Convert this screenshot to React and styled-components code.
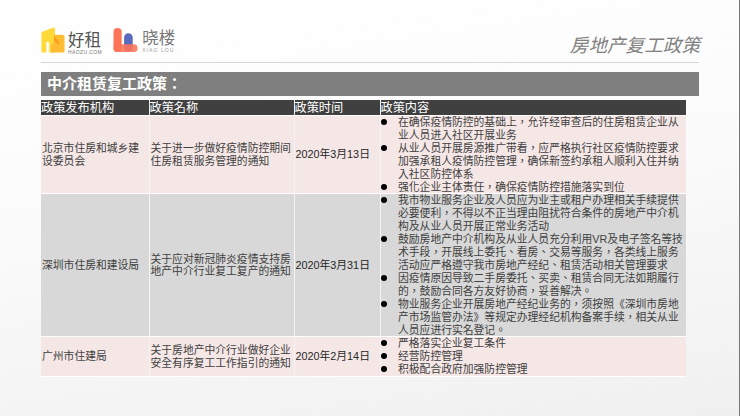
import React from 'react'
import styled, { createGlobalStyle } from 'styled-components'

const cjk = '"Liberation Sans", "Noto Sans CJK TC", sans-serif'

const GlobalStyle = createGlobalStyle`
    html, body {
        margin: 0;
        padding: 0;
    }
`

const Page = styled.div`
    width: 740px;
    height: 416px;
    box-sizing: border-box;
    padding: 0 40px 0 41px;
    overflow: hidden;
    background: linear-gradient(172deg, #ffffff 0%, #fbfbfb 45%, #f0f0f0 100%);
    border-right: 1px solid #777;
    font-family: ${cjk};
`

const Header = styled.header`
    height: 63px;
    box-sizing: border-box;
    padding-bottom: 5px;
    display: flex;
    align-items: flex-end;
    justify-content: space-between;
    border-bottom: 1px solid #d6d6d6;
`

const Logos = styled.div`
    display: flex;
    align-items: flex-end;
    gap: 11px;
    margin-bottom: 4px;
`

const Logo = styled.div`
    display: flex;
    align-items: flex-end;
    gap: 3px;
`

const LogoText = styled.div`
    display: flex;
    flex-direction: column;
    margin-bottom: ${p => p.$lift}px;
`

const LogoName = styled.span`
    font-size: 16.5px;
    line-height: 18px;
    color: ${p => p.$color};
    white-space: nowrap;
`

const LogoSub = styled.span`
    font-size: 5px;
    line-height: 6px;
    letter-spacing: ${p => p.$spacing}px;
    color: ${p => p.$color};
    white-space: nowrap;
`

const PageTitle = styled.h1`
    margin: 0 -1px 0 0;
    font-size: 18.6px;
    line-height: 22px;
    font-weight: 400;
    font-style: italic;
    color: #808080;
    white-space: nowrap;
`

const Banner = styled.h2`
    margin: 9px 0 0;
    height: 24px;
    padding-left: 6px;
    background: #7f7f7f;
    color: #fff;
    font-size: 15px;
    line-height: 24px;
    font-weight: 700;
`

const Table = styled.table`
    margin-top: 4px;
    width: 645px;
    table-layout: fixed;
    border-collapse: collapse;
    color: #404040;
    font-size: 10.8px;
    line-height: 12.9px;
`

const HeadCell = styled.th`
    height: 15px;
    padding: 0;
    background: #404040;
    color: #fff;
    font-size: 12.2px;
    line-height: 14px;
    font-weight: 400;
    text-align: left;
    white-space: nowrap;
    border-right: 1px solid #eee;
    border-bottom: 1px solid #fff;
    &:last-child {
        border-right: 0;
    }
`

const Cell = styled.td`
    padding: 0 0 0 1px;
    background: ${p => (p.$alt ? '#d8d8d8' : '#f5e7e6')};
    vertical-align: middle;
    white-space: pre-line;
    border-right: 1px solid #f4f4f4;
    border-bottom: 1px solid #fff;
    &:last-child {
        padding-left: 0;
        border-right: 0;
    }
`

const DateCell = styled(Cell)`
    color: #262626;
    white-space: nowrap;
`

const BulletList = styled.ul`
    margin: 0;
    padding: 0;
    list-style: none;
`

const Bullet = styled.li`
    display: flex;
    white-space: pre;
    &::before {
        content: '';
        flex: none;
        width: 6px;
        height: 6px;
        margin: 3px 11.5px 0 0;
        border-radius: 50%;
        background: #000;
    }
`

const HaozuIcon = () => (
    <svg width="24" height="26" viewBox="0 0 24 27">
        <path d="M0 6.5 Q0 5 1.5 4.6 L12.5 0.5 Q14 0 14 2 L14 26.5 L8 26.5 L8 17 Q8 15 6.5 15 Q5 15 5 17 L5 26.5 L1.5 26.5 Q0 26.5 0 25 Z" fill="#ffd938" />
        <path d="M13 8 L22 8 Q24 8 24 10 L24 25 Q24 26.5 22.5 26.5 L10 26.5 L10 19 Q13 17 13 14 Z" fill="#ffbc33" />
        <path d="M13 9 L18 15 L18 19 L13 14 Z" fill="#ff9d1e" />
    </svg>
)

const XiaolouIcon = () => (
    <svg width="26" height="25" viewBox="0 0 26 26">
        <rect x="11" y="5.5" width="9" height="19" rx="4.5" fill="#5a6bbd" />
        <rect x="0" y="0" width="8.5" height="25" rx="4.25" fill="#ff7358" />
        <rect x="0" y="17" width="25" height="8" rx="4" fill="#ff7358" opacity="0.88" />
    </svg>
)

const rows = [
    {
        org: '北京市住房和城乡建\n设委员会',
        name: '关于进一步做好疫情防控期间\n住房租赁服务管理的通知',
        date: '2020年3月13日',
        items: [
            '在确保疫情防控的基础上，允许经审查后的住房租赁企业从\n业人员进入社区开展业务',
            '从业人员开展房源推广带看，应严格执行社区疫情防控要求\n加强承租人疫情防控管理，确保新签约承租人顺利入住并纳\n入社区防控体系',
            '强化企业主体责任，确保疫情防控措施落实到位',
        ],
    },
    {
        org: '深圳市住房和建设局',
        name: '关于应对新冠肺炎疫情支持房\n地产中介行业复工复产的通知',
        date: '2020年3月31日',
        alt: true,
        items: [
            '我市物业服务企业及人员应为业主或租户办理相关手续提供\n必要便利，不得以不正当理由阻扰符合条件的房地产中介机\n构及从业人员开展正常业务活动',
            '鼓励房地产中介机构及从业人员充分利用VR及电子签名等技\n术手段，开展线上委托、看房、交易等服务，各类线上服务\n活动应严格遵守我市房地产经纪、租赁活动相关管理要求',
            '因疫情原因导致二手房委托、买卖、租赁合同无法如期履行\n的，鼓励合同各方友好协商，妥善解决。',
            '物业服务企业开展房地产经纪业务的，须按照《深圳市房地\n产市场监管办法》等规定办理经纪机构备案手续，相关从业\n人员应进行实名登记。',
        ],
    },
    {
        org: '广州市住建局',
        name: '关于房地产中介行业做好企业\n安全有序复工工作指引的通知',
        date: '2020年2月14日',
        items: ['严格落实企业复工条件', '经营防控管理', '积极配合政府加强防控管理'],
    },
]

export default function App() {
    return (
        <Page>
            <GlobalStyle />
            <Header>
                <Logos>
                    <Logo>
                        <HaozuIcon />
                        <LogoText $lift={-2}>
                            <LogoName $color="#555">好租</LogoName>
                            <LogoSub $color="#777" $spacing={0.4}>HAOZU.COM</LogoSub>
                        </LogoText>
                    </Logo>
                    <Logo>
                        <XiaolouIcon />
                        <LogoText $lift={0}>
                            <LogoName $color="#777">晓楼</LogoName>
                            <LogoSub $color="#999" $spacing={1.1}>XIAO LOU</LogoSub>
                        </LogoText>
                    </Logo>
                </Logos>
                <PageTitle>房地产复工政策</PageTitle>
            </Header>
            <Banner>中介租赁复工政策：</Banner>
            <Table>
                <colgroup>
                    <col width="108" />
                    <col width="145" />
                    <col width="86" />
                    <col width="306" />
                </colgroup>
                <thead>
                    <tr>
                        <HeadCell>政策发布机构</HeadCell>
                        <HeadCell>政策名称</HeadCell>
                        <HeadCell>政策时间</HeadCell>
                        <HeadCell>政策内容</HeadCell>
                    </tr>
                </thead>
                <tbody>
                    {rows.map(row => (
                        <tr key={row.org}>
                            <Cell $alt={row.alt}>{row.org}</Cell>
                            <Cell $alt={row.alt}>{row.name}</Cell>
                            <DateCell $alt={row.alt}>{row.date}</DateCell>
                            <Cell $alt={row.alt}>
                                <BulletList>
                                    {row.items.map(item => (
                                        <Bullet key={item}><span>{item}</span></Bullet>
                                    ))}
                                </BulletList>
                            </Cell>
                        </tr>
                    ))}
                </tbody>
            </Table>
        </Page>
    )
}
